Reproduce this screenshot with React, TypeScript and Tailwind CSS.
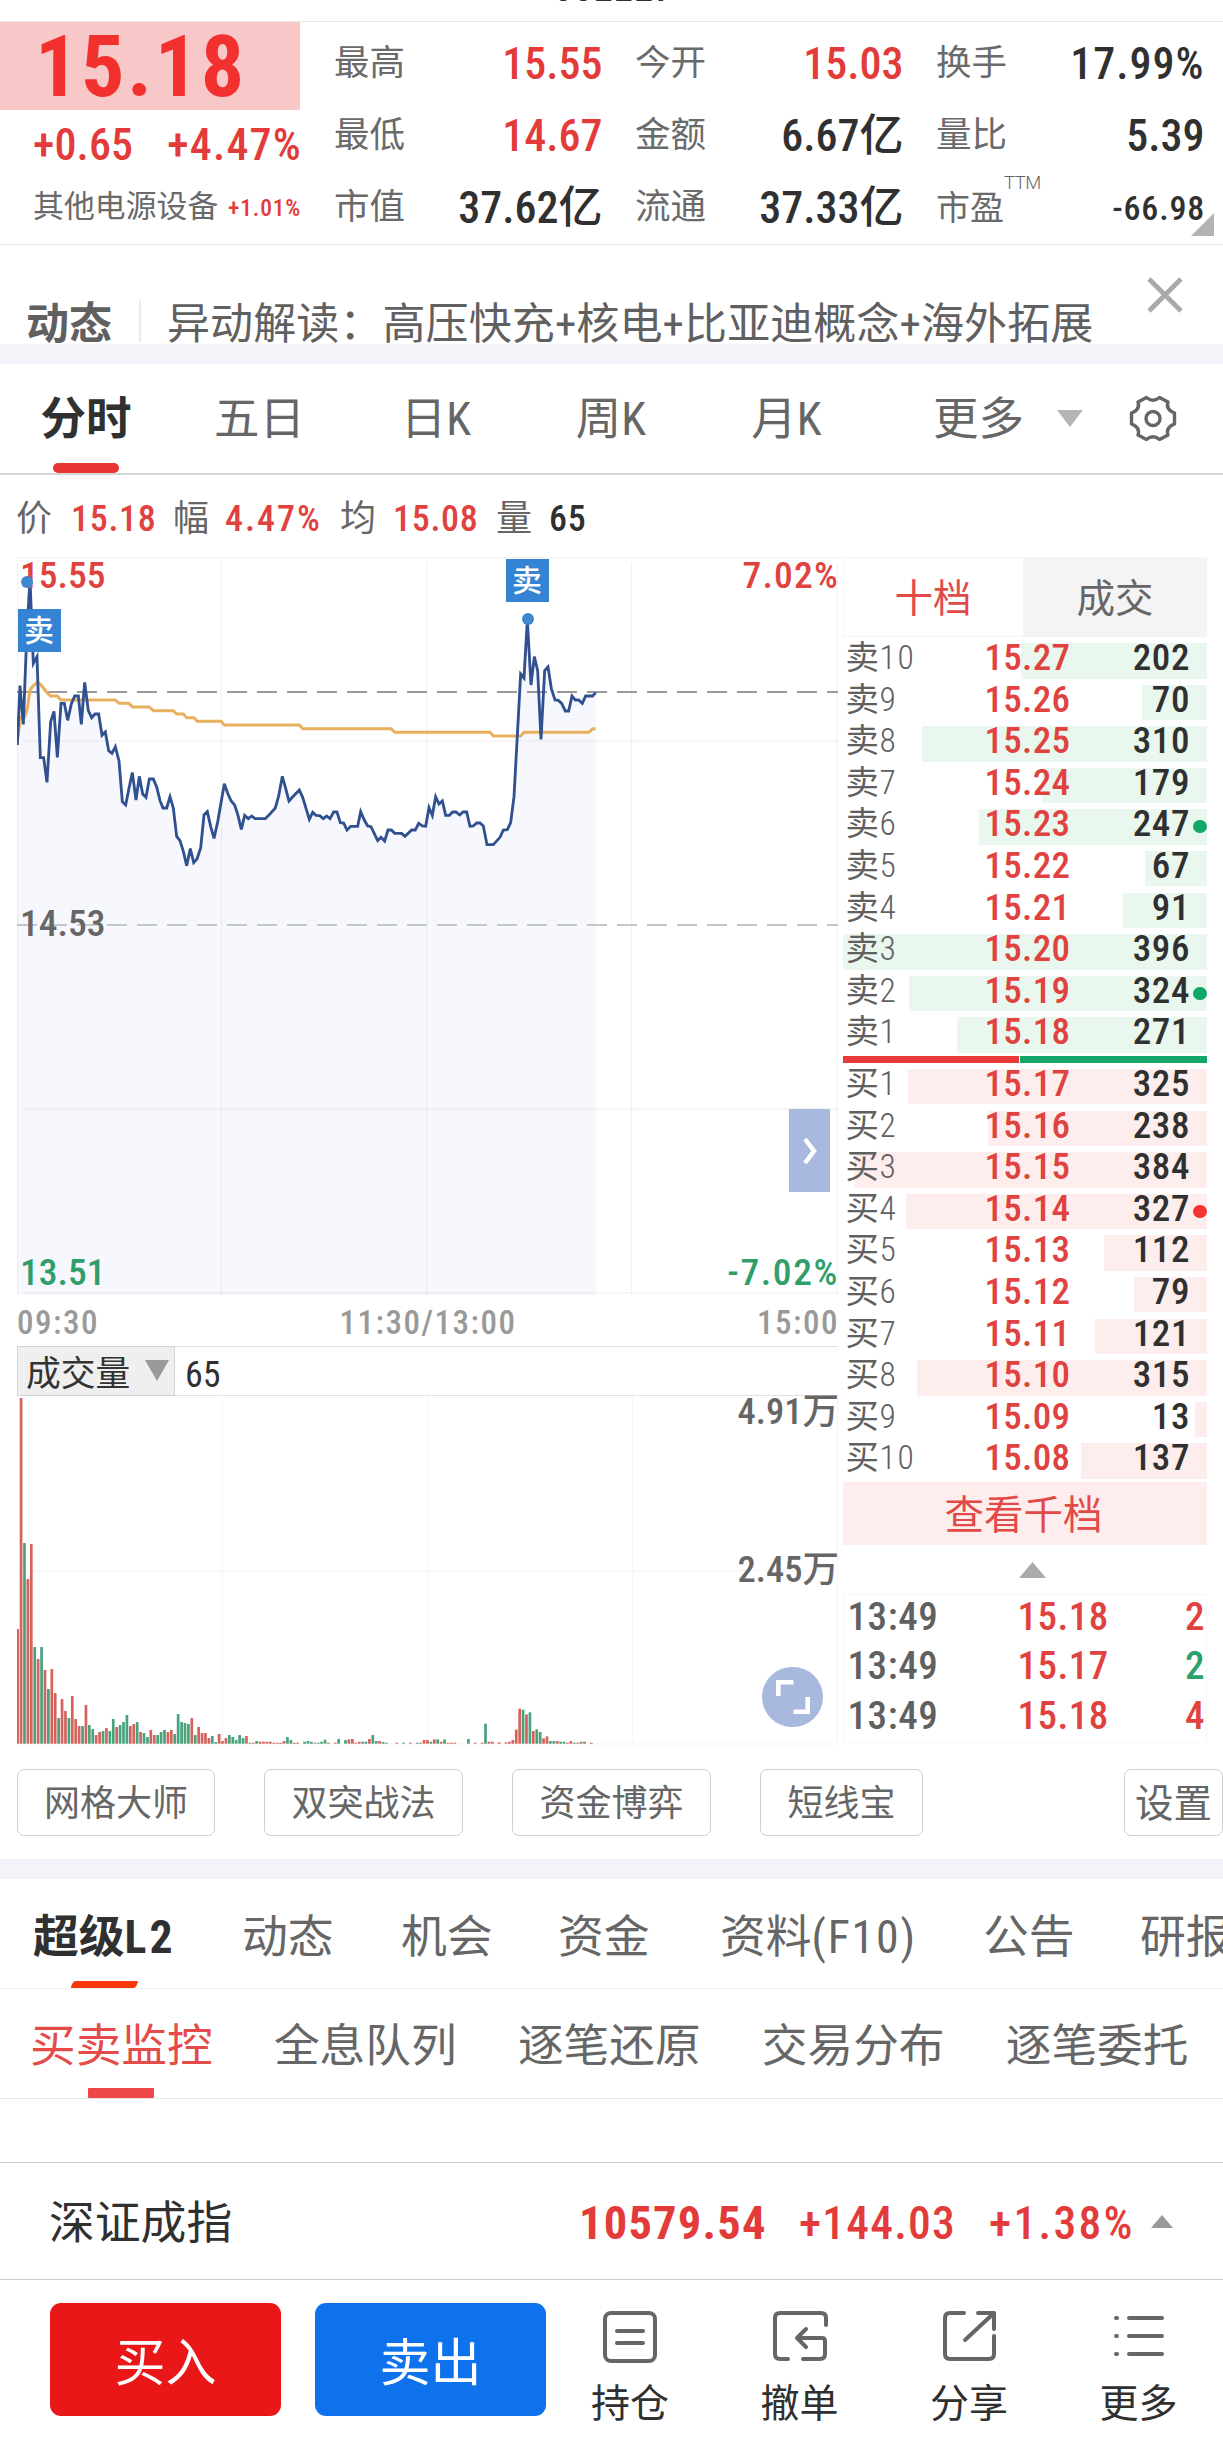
import React from 'react';

type Bar = [string, number];

const PRICE_POINTS =
  '52,615 60,437 70,553 80,290 90,118 100,370 111,350 121,653 131,653 141,727 152,545 162,514 172,652 183,490 193,490 203,541 214,492 224,468 235,468 244,553 254,427 265,512 275,533 285,522 296,522 306,586 316,576 326,632 336,640 346,620 357,663 367,785 377,795 387,745 397,698 408,780 418,709 428,762 438,772 448,717 460,717 470,741 480,782 489,804 500,804 510,770 520,804 530,889 540,902 550,934 560,977 571,926 581,968 591,957 602,924 612,825 622,815 632,859 642,895 653,846 673,731 683,760 693,782 704,795 714,826 724,868 734,826 745,836 755,828 765,836 796,836 806,826 826,804 836,768 847,709 857,745 867,783 877,772 898,750 908,772 928,838 938,817 948,826 959,827 970,836 980,828 990,836 1001,816 1011,816 1021,848 1031,849 1041,870 1052,859 1073,859 1082,815 1093,840 1103,858 1113,860 1133,902 1143,892 1154,903 1164,870 1174,870 1184,880 1205,880 1215,889 1235,870 1246,870 1256,850 1267,858 1277,859 1287,803 1297,826 1307,770 1317,792 1327,783 1337,826 1348,826 1358,816 1368,816 1379,825 1389,816 1400,816 1410,859 1420,858 1430,849 1440,849 1450,858 1461,914 1480,914 1500,892 1510,870 1522,869 1532,848 1542,770 1562,402 1572,414 1582,240 1593,435 1603,350 1613,392 1623,598 1634,392 1644,381 1654,445 1665,480 1675,481 1685,490 1696,513 1706,513 1716,468 1726,480 1736,480 1747,490 1757,468 1778,468 1787,458';

const AVERAGE_POINTS =
  '52,600 62,530 74,530 82,505 90,450 100,437 111,428 121,432 141,458 152,468 172,468 183,480 346,480 357,490 387,490 398,501 448,501 460,512 520,512 530,522 550,522 560,533 582,533 592,544 663,544 673,555 898,555 908,566 1174,566 1184,577 1470,577 1480,588 1562,588 1572,577 1767,577 1777,567 1787,566';

const VOLUME: Bar[] =
  'R344 R1037 G602 R494 R599 G290 R254 G290 R221 G164 R224 R152 G77 R134 R98 G77 R143 R74 R53 G53 R116 G56 G44 R26 R35 G38 R47 G38 G74 R50 G56 G65 G86 R53 R59 G65 R35 G32 G20 R41 R26 G26 G35 G41 R35 R41 G29 G89 G65 G62 G59 R77 G26 R50 R32 R32 R17 G23 G5 R29 R8 R17 G26 G20 G11 G26 G17 R23 G3 R3 G8 R6 R6 R6 R6 R3 R3 R3 R8 G20 G11 R3 R3 R0 G6 G8 G6 R3 G3 G6 G12 R3 R0 R3 G14 G0 G11 R13 R14 R3 R6 G6 G6 R14 G26 G8 R8 G5 G3 R0 R0 R3 R0 G3 R0 R3 R0 G3 R3 R11 R11 G6 R13 G13 R6 G13 R3 R3 R3 R0 R0 R0 G14 R0 R3 R0 R3 G60 R6 R6 R0 R4 R0 R4 R6 R11 R42 R105 G102 R88 G94 R38 G43 G35 R16 R22 G8 G8 R8 G6 G6 R3 R8 G3 R3 G6 R6 R0 R3'
    .split(' ')
    .map((s) => [s[0], Number(s.slice(1))]);

const SELLS: [string, string, number, boolean?][] = [
  ['10', '15.27', 202],
  ['9', '15.26', 70],
  ['8', '15.25', 310],
  ['7', '15.24', 179],
  ['6', '15.23', 247, true],
  ['5', '15.22', 67],
  ['4', '15.21', 91],
  ['3', '15.20', 396],
  ['2', '15.19', 324, true],
  ['1', '15.18', 271],
];
const BUYS: [string, string, number, boolean?][] = [
  ['1', '15.17', 325],
  ['2', '15.16', 238],
  ['3', '15.15', 384],
  ['4', '15.14', 327, true],
  ['5', '15.13', 112],
  ['6', '15.12', 79],
  ['7', '15.11', 121],
  ['8', '15.10', 315],
  ['9', '15.09', 13],
  ['10', '15.08', 137],
];

function Stat({ label, value, tone }: { label: string; value: React.ReactNode; tone: string }) {
  return (
    <div className="flex h-[72px] items-center justify-between">
      <span className="text-[35.500px] text-[#6a6a6a]">{label}</span>
      <span className={'-mr-[1.500px] text-[44px] font-medium ' + tone}>{value}</span>
    </div>
  );
}

function Summary() {
  return (
    <section className="flex h-[223px] border-b border-[#ebebeb]">
      <div className="w-[300px]">
        <div className="flex h-[88px] items-center bg-[#f8c7c8] pl-[35px] pt-[2px] text-[86px] font-bold leading-[86px] tracking-[2.600px] text-[#f2302e]">
          <span>15.18</span>
        </div>
        <div className="flex h-[67px] items-center justify-between pl-[33px] pt-[2px] text-[44px] font-medium text-[#e23b39]">
          <span className="tracking-[0.100px]">+0.65</span>
          <span className="-mr-[2px] tracking-[1.200px]">+4.47%</span>
        </div>
        <div className="flex h-[60px] items-center justify-between pl-[33px] pt-[1px]">
          <span className="text-[30.900px] text-[#6a6a6a]">其他电源设备</span>
          <span className="-mr-[1px] pt-[3px] text-[23.500px] font-medium tracking-[0.800px] text-[#e23b39]">+1.01%</span>
        </div>
      </div>
      <div className="ml-[34px] grid w-[869px] grid-cols-3 content-start gap-x-[34px] pt-[6px]">
        <Stat label="最高" value="15.55" tone="text-[#e23b39]" />
        <Stat label="今开" value="15.03" tone="text-[#e23b39]" />
        <Stat label="换手" value="17.99%" tone="text-[#303030] tracking-[1px]" />
        <Stat label="最低" value="14.67" tone="text-[#e23b39]" />
        <Stat label="金额" value="6.67亿" tone="text-[#303030]" />
        <Stat label="量比" value="5.39" tone="text-[#303030]" />
        <Stat label="市值" value="37.62亿" tone="text-[#303030]" />
        <Stat label="流通" value="37.33亿" tone="text-[#303030]" />
        <div className="relative flex h-[72px] items-center justify-between">
          <span className="text-[34px] text-[#6a6a6a]">市盈</span>
          <span className="absolute left-[68px] top-[-3px] font-[Roboto] text-[18.500px] font-light leading-[28px] tracking-[-0.500px] text-[#666]">TTM</span>
          <span className="-mr-[2px] pt-[1px] text-[34px] font-medium tracking-[0.800px] text-[#303030]">-66.98</span>
          <svg className="absolute -right-[11px] bottom-[8px] h-[23px] w-[23px]" viewBox="0 0 23 23">
            <path d="M23 0V23H0Z" fill="#b3b3b3" />
          </svg>
        </div>
      </div>
    </section>
  );
}

function News() {
  return (
    <section className="flex h-[99px] items-start pl-[26px] pt-[54px] text-[43px] leading-[50px] text-[#606060]">
      <span className="w-[113px] text-[43px] font-bold">动态</span>
      <span className="mt-[1px] h-[42px] w-[2px] bg-[#ebebeb]" />
      <span className="ml-[26px] whitespace-nowrap tracking-[0.100px]">异动解读：高压快充+核电+比亚迪概念+海外拓展</span>
      <svg className="-mt-[22px] ml-auto mr-[40px] h-[36px] w-[36px]" viewBox="0 0 36 36">
        <path d="M2 2 34 34M34 2 2 34" stroke="#aaaaaa" strokeWidth="4.800" />
      </svg>
    </section>
  );
}

function ChartTabs() {
  return (
    <nav className="flex h-[111px] items-start border-b-2 border-[#d4d8d7] text-[45.500px] leading-[111px] text-[#666]">
      <div className="relative w-[172px] text-center font-bold text-[#303030]">
        分时
        <span className="absolute left-[53px] top-[99px] h-[10px] w-[66px] rounded-full bg-[#ea3434]" />
      </div>
      <span className="w-[175px] text-center">五日</span>
      <span className="w-[178px] text-center">日K</span>
      <span className="w-[172px] text-center">周K</span>
      <span className="w-[179px] text-center">月K</span>
      <span className="ml-[57px] w-[92px]">更多</span>
      <svg className="ml-[32px] mt-[46px] h-[17px] w-[26px]" viewBox="0 0 26 17">
        <path d="M0 0H26L13 17Z" fill="#b5b5b5" />
      </svg>
      <svg className="ml-[46px] mt-[31px] h-[47px] w-[48px]" viewBox="0 0 48 47" fill="none" stroke="#666" strokeWidth="3.400" strokeLinejoin="round">
        <path d="M17.500 2.500Q24 8 30.500 2.500L39 7Q36.500 14.500 45.500 18V29Q36.500 32.500 39 40L30.500 44.500Q24 39 17.500 44.500L9 40Q11.500 32.500 2.500 29V18Q11.500 14.500 9 7Z" />
        <circle cx="24" cy="23.500" r="7" />
      </svg>
    </nav>
  );
}

function QuoteLine() {
  return (
    <div className="flex h-[82px] items-center pl-[16px] pt-[6px] text-[36px] font-medium text-[#e0423f]">
      <span className="w-[55px] text-[36px] font-normal text-[#666]">价</span>
      <span className="w-[102px] tracking-[0.700px]">15.18</span>
      <span className="w-[52px] text-[36px] font-normal text-[#666]">幅</span>
      <span className="w-[115px] tracking-[2px]">4.47%</span>
      <span className="w-[53px] text-[36px] font-normal text-[#666]">均</span>
      <span className="w-[103px] tracking-[0.700px]">15.08</span>
      <span className="w-[53px] text-[36px] font-normal text-[#666]">量</span>
      <span className="tracking-[0.700px] text-[#303030]">65</span>
    </div>
  );
}

function SellFlag() {
  return (
    <span className="flex h-[43px] w-[43px] items-center justify-center bg-[#3583d3] text-[30px] font-medium text-white">卖</span>
  );
}

function PriceChart() {
  return (
    <div className="relative h-[738px] w-[821px] text-[37.500px] font-medium leading-[38px]">
      <svg className="block h-[738px] w-[821px]" viewBox="17 557 821 738" fill="none">
        <g transform="translate(0 540) scale(0.33333)">
          <polygon points={'52,2264 ' + PRICE_POINTS + ' 1787,2264'} fill="#f6f8fd" />
        </g>
        <g stroke="#000" strokeOpacity="0.05" strokeWidth="1.3">
          <path d="M17 557.500H838M23 741H838M23 1109H838M23 1293H838" />
          <path d="M17.600 563V1294M221.500 563V1294M427 563V1294M631.500 563V1294M837 563V1294" />
        </g>
        <path d="M17 692H838" stroke="#999" strokeWidth="2" strokeDasharray="20 10" />
        <path d="M17 925H838" stroke="#c4c7c7" strokeWidth="2" strokeDasharray="20 10" />
        <g transform="translate(0 540) scale(0.33333)">
          <polyline points={AVERAGE_POINTS} stroke="#e8b05e" strokeWidth="9" />
          <polyline points={PRICE_POINTS} stroke="#30508f" strokeWidth="8.500" />
        </g>
      </svg>
      <span className="absolute left-[3px] top-[-1px] text-[#e0423f]">15.55</span>
      <span className="absolute right-[-1px] top-[-1px] tracking-[1.200px] text-[#e0423f]">7.02%</span>
      <span className="absolute left-[3px] top-[347px] text-[#666]">14.53</span>
      <span className="absolute left-[3px] top-[696px] text-[#2f9e6b]">13.51</span>
      <span className="absolute right-[-1px] top-[696px] tracking-[1.600px] text-[#2f9e6b]">-7.02%</span>
      <span className="absolute left-[4px] top-[19px] h-[12px] w-[12px] rounded-full bg-[#3f87cf]" />
      <span className="absolute left-[504.500px] top-[55.500px] h-[12px] w-[12px] rounded-full bg-[#3f87cf]" />
      <div className="absolute left-[0.500px] top-[52px]"><SellFlag /></div>
      <div className="absolute left-[488.500px] top-[2px]"><SellFlag /></div>
      <button className="absolute left-[772px] top-[552px] flex h-[83px] w-[41px] items-center justify-center bg-[#a8b8de]">
        <svg className="h-[28px] w-[14px]" viewBox="0 0 14 28" fill="none">
          <path d="M2 2 11 14 2 26" stroke="#fff" strokeWidth="4.500" />
        </svg>
      </button>
    </div>
  );
}

function VolumeChart() {
  return (
    <div className="relative h-[349px] w-[821px] text-[36.500px] font-medium leading-[38px] text-[#666]">
      <svg className="block h-[349px] w-[821px]" viewBox="17 1396 821 349" fill="none">
        <path d="M222 1396V1744M427.500 1396V1744M632.500 1396V1744M837.500 1396V1744M17 1571H838M17 1744H838" stroke="#000" strokeOpacity="0.03" strokeWidth="1.300" />
        {VOLUME.map(([side, h], i) =>
          h ? (
            <rect key={i} x={16.3 + i * 3.415} y={1743.7 - h / 3} width="2.7" height={h / 3} fill={side === 'R' ? '#d3635c' : '#48a27c'} />
          ) : null,
        )}
      </svg>
      <span className="absolute right-[-1px] top-[-3px]">4.91万</span>
      <span className="absolute right-[-1px] top-[155px]">2.45万</span>
      <button className="absolute left-[745px] top-[271px] flex h-[60px] w-[61px] items-center justify-center rounded-full bg-[#a8b8de]">
        <svg className="h-[34px] w-[34px]" viewBox="0 0 34 34" fill="none" stroke="#fff" strokeWidth="4.600">
          <path d="M2.300 16V2.300H17.500M31.700 17V31.700H17.500" />
        </svg>
      </button>
    </div>
  );
}

function BookRow({ side, row }: { side: 'sell' | 'buy'; row: [string, string, number, boolean?] }) {
  const [level, price, size, mark] = row;
  return (
    <div className="relative flex h-[41.600px] items-start text-[37px] leading-[30px]">
      <div
        className={'absolute right-0 top-0 h-[35.500px] ' + (side === 'sell' ? 'bg-[#e9f7ee]' : 'bg-[#fdeeed]')}
        style={{ width: (size / 396) * 364 }}
      />
      <span className="relative w-[110px] pl-[3px] text-[33.500px] font-light tracking-[1.600px] text-[#606060]">
        <span className="font-normal tracking-[0.500px]">{side === 'sell' ? '卖' : '买'}</span>
        <span>{level}</span>
      </span>
      <span className="relative w-[120px] pl-[32px] font-medium tracking-[0.300px] text-[#e0423f]">{price}</span>
      <span className="relative flex-1 pr-[16.500px] text-right font-medium tracking-[0.600px] text-[#303030]">{size}</span>
      {mark && (
        <span className={'absolute right-0 top-[11px] h-[13px] w-[14px] rounded-full ' + (side === 'sell' ? 'bg-[#10a866]' : 'bg-[#f33430]')} />
      )}
    </div>
  );
}

function OrderBook() {
  return (
    <aside className="ml-[4.500px] w-[364px]">
      <div className="mb-[6px] flex h-[80px] text-[38.500px] leading-[83px]">
        <span className="w-[181px] border border-[#f4f4f4] text-center leading-[82px] text-[#e24a48]">十档</span>
        <span className="flex-1 bg-[#f4f4f4] text-center text-[#666]">成交</span>
      </div>
      {SELLS.map((r) => (
        <BookRow key={r[0]} side="sell" row={r} />
      ))}
      <div className="-mt-[3px] mb-[5.500px] flex h-[7.500px]">
        <span className="w-[176px] bg-[#e83a38]" />
        <span className="ml-[1px] flex-1 bg-[#12a768]" />
      </div>
      {BUYS.map((r) => (
        <BookRow key={r[0]} side="buy" row={r} />
      ))}
      <button className="-mt-[3px] block h-[63px] w-full bg-[#fdeeed] pr-[2px] text-[39.500px] leading-[67px] text-[#e24a48]">查看千档</button>
      <svg className="ml-[176px] mt-[17px] h-[16px] w-[27px]" viewBox="0 0 27 16">
        <path d="M13.500 0 27 16H0Z" fill="#ababab" />
      </svg>
      <div className="mt-[16px] h-[149px] border border-[#f6f6f6] text-[39px] font-medium leading-[49px]">
        {[
          ['15.18', '2', 'text-[#e0423f]'],
          ['15.17', '2', 'text-[#2aa06b]'],
          ['15.18', '4', 'text-[#e0423f]'],
        ].map(([price, n, tone], i) => (
          <div key={i} className="-mt-[2px] mb-[2.500px] flex pl-[4px] pr-[1px]">
            <span className="w-[170px] tracking-[0.600px] text-[#606060]">13:49</span>
            <span className="tracking-[0.500px] text-[#e0423f]">{price}</span>
            <span className={'ml-auto ' + tone}>{n}</span>
          </div>
        ))}
      </div>
    </aside>
  );
}

function Charts() {
  return (
    <div className="flex h-[1188px] pl-[17px]">
      <div className="w-[821px]">
        <PriceChart />
        <div className="flex h-[51px] items-center justify-between pt-[5px] text-[33px] font-medium tracking-[1.500px] text-[#999]">
          <span>09:30</span>
          <span>11:30/13:00</span>
          <span className="-mr-[1px]">15:00</span>
        </div>
        <div className="flex h-[50px] items-stretch border-y border-[#e2e2e2]">
          <div className="-my-px flex w-[158px] items-center border border-[#d4d4d4] bg-[#efefef] pl-[8px] pt-[6px] text-[34.800px] text-[#333]">
            成交量
            <svg className="-mt-[8px] ml-[15px] h-[21px] w-[24px]" viewBox="0 0 24 21">
              <path d="M0 0H24L12 21Z" fill="#999" />
            </svg>
          </div>
          <span className="pl-[10px] text-[36px] leading-[56px] text-[#303030]">65</span>
        </div>
        <VolumeChart />
      </div>
      <OrderBook />
    </div>
  );
}

function Tools() {
  const chip = 'flex h-[67px] shrink-0 items-center justify-center rounded-[7px] border-[1.500px] border-[#cfcfcf] pt-[3px]';
  return (
    <div className="flex h-[114px] items-start overflow-hidden pl-[17px] pt-[24px] text-[36px] text-[#666]">
      <span className={chip + ' w-[198px]'}>网格大师</span>
      <span className={chip + ' ml-[49px] w-[199px]'}>双突战法</span>
      <span className={chip + ' ml-[49px] w-[199px]'}>资金博弈</span>
      <span className={chip + ' ml-[49px] w-[163px]'}>短线宝</span>
      <span className={chip + ' ml-[201px] w-[99px] text-[38.500px]'}>设置</span>
    </div>
  );
}

function DetailTabs() {
  return (
    <>
      <nav className="relative flex h-[110px] overflow-hidden whitespace-nowrap border-b border-[#f0f0f0] pl-[33px] text-[45.800px] leading-[117px] text-[#666]">
        <span className="w-[209px] shrink-0 font-bold text-[#303030]">超级<span className="tracking-[3px]">L2</span></span>
        <span className="w-[159px] shrink-0">动态</span>
        <span className="w-[157px] shrink-0">机会</span>
        <span className="w-[162px] shrink-0">资金</span>
        <span className="w-[263px] shrink-0">资料<span className="tracking-[1.800px]">(F10)</span></span>
        <span className="w-[157px] shrink-0">公告</span>
        <span className="shrink-0">研报</span>
        <span className="absolute bottom-0 left-[72px] h-[7px] w-[65px] -skew-x-[25deg] rounded-[2px] bg-[#f6380c]" />
      </nav>
      <nav className="relative flex h-[110px] gap-[61.200px] whitespace-nowrap border-b border-[#e6e6e6] pl-[30px] text-[45.700px] leading-[116px] text-[#666]">
        <span className="text-[#e54b49]">买卖监控</span>
        <span>全息队列</span>
        <span>逐笔还原</span>
        <span>交易分布</span>
        <span>逐笔委托</span>
        <span className="absolute bottom-0 left-[88px] h-[10px] w-[66px] rounded-[1px] bg-[#ef4747]" />
      </nav>
    </>
  );
}

function IndexBar() {
  return (
    <div className="flex h-[118px] items-center border-y-[1.500px] border-[#cccccc] pl-[49px] text-[45.500px] font-medium text-[#e23b39]">
      <span className="w-[530px] pt-[7px] text-[45.800px] font-normal text-[#303030]">深证成指</span>
      <span className="w-[220px] pt-[6px] text-[46.500px] font-bold tracking-[1.200px]">10579.54</span>
      <span className="w-[190px] pt-[6px] tracking-[1.200px]">+144.03</span>
      <span className="w-[145px] pt-[6px] tracking-[2.300px]">+1.38%</span>
      <svg className="ml-[17px] h-[13px] w-[22px]" viewBox="0 0 22 13">
        <path d="M11 0 22 13H0Z" fill="#999" />
      </svg>
    </div>
  );
}

function Action({ label, children }: { label: string; children: React.ReactNode }) {
  return (
    <div className="flex w-[76px] flex-col items-center">
      <svg className="h-[56px] w-[56px]" viewBox="0 0 56 56" fill="none" stroke="#666" strokeWidth="4" strokeLinecap="round" strokeLinejoin="round">
        {children}
      </svg>
      <span className="whitespace-nowrap pt-[17px] text-[39px] leading-[44px] text-[#303030]">{label}</span>
    </div>
  );
}

function TradeBar() {
  return (
    <footer className="flex pl-[50px] pt-[23px]">
      <button className="h-[113px] w-[231px] rounded-[11px] bg-[#ea1719] text-[51px] leading-[121px] text-white">买入</button>
      <button className="ml-[34px] h-[113px] w-[231px] rounded-[11px] bg-[#0d72ec] text-[51px] leading-[121px] text-white">卖出</button>
      <div className="ml-[46px] flex gap-[93.500px] pt-[6px]">
        <Action label="持仓">
          <rect x="3" y="4" width="50" height="48" rx="6" />
          <path d="M15 22H41M15 34H41" />
        </Action>
        <Action label="撤单">
          <path d="M54 16V9Q54 4 49 4H8Q3 4 3 9V45Q3 50 8 50H16M31 50H48Q53 50 53 45V32Q53 29 50 29H26M34 20 25 29 34 38" />
        </Action>
        <Action label="分享">
          <path d="M23 4H9Q4 4 4 9V45Q4 50 9 50H48Q53 50 53 45V27M37 4H53V20M53 4 24 31" />
        </Action>
        <Action label="更多">
          <path d="M18 9H51M18 27H51M18 45H51M5 9H6M5 27H6M5 45H6" />
        </Action>
      </div>
    </footer>
  );
}

export default function App() {
  return (
    <main className="relative h-[2439px] w-[1223px] overflow-hidden bg-white font-['Roboto_Condensed','Noto_Sans_CJK_SC',sans-serif]">
      <header className="relative h-[22px] overflow-hidden border-b border-[#e8e8e8]">
        <span className="absolute left-[554px] top-[-31px] text-[37px] font-medium leading-[40px] tracking-[1.600px] text-[#303030]">002227</span>
      </header>
      <Summary />
      <News />
      <div className="h-[20px] bg-[#f3f4f9]" />
      <ChartTabs />
      <QuoteLine />
      <Charts />
      <Tools />
      <div className="h-[20px] bg-[#f3f4f9]" />
      <DetailTabs />
      <div className="h-[63px]" />
      <IndexBar />
      <TradeBar />
    </main>
  );
}
